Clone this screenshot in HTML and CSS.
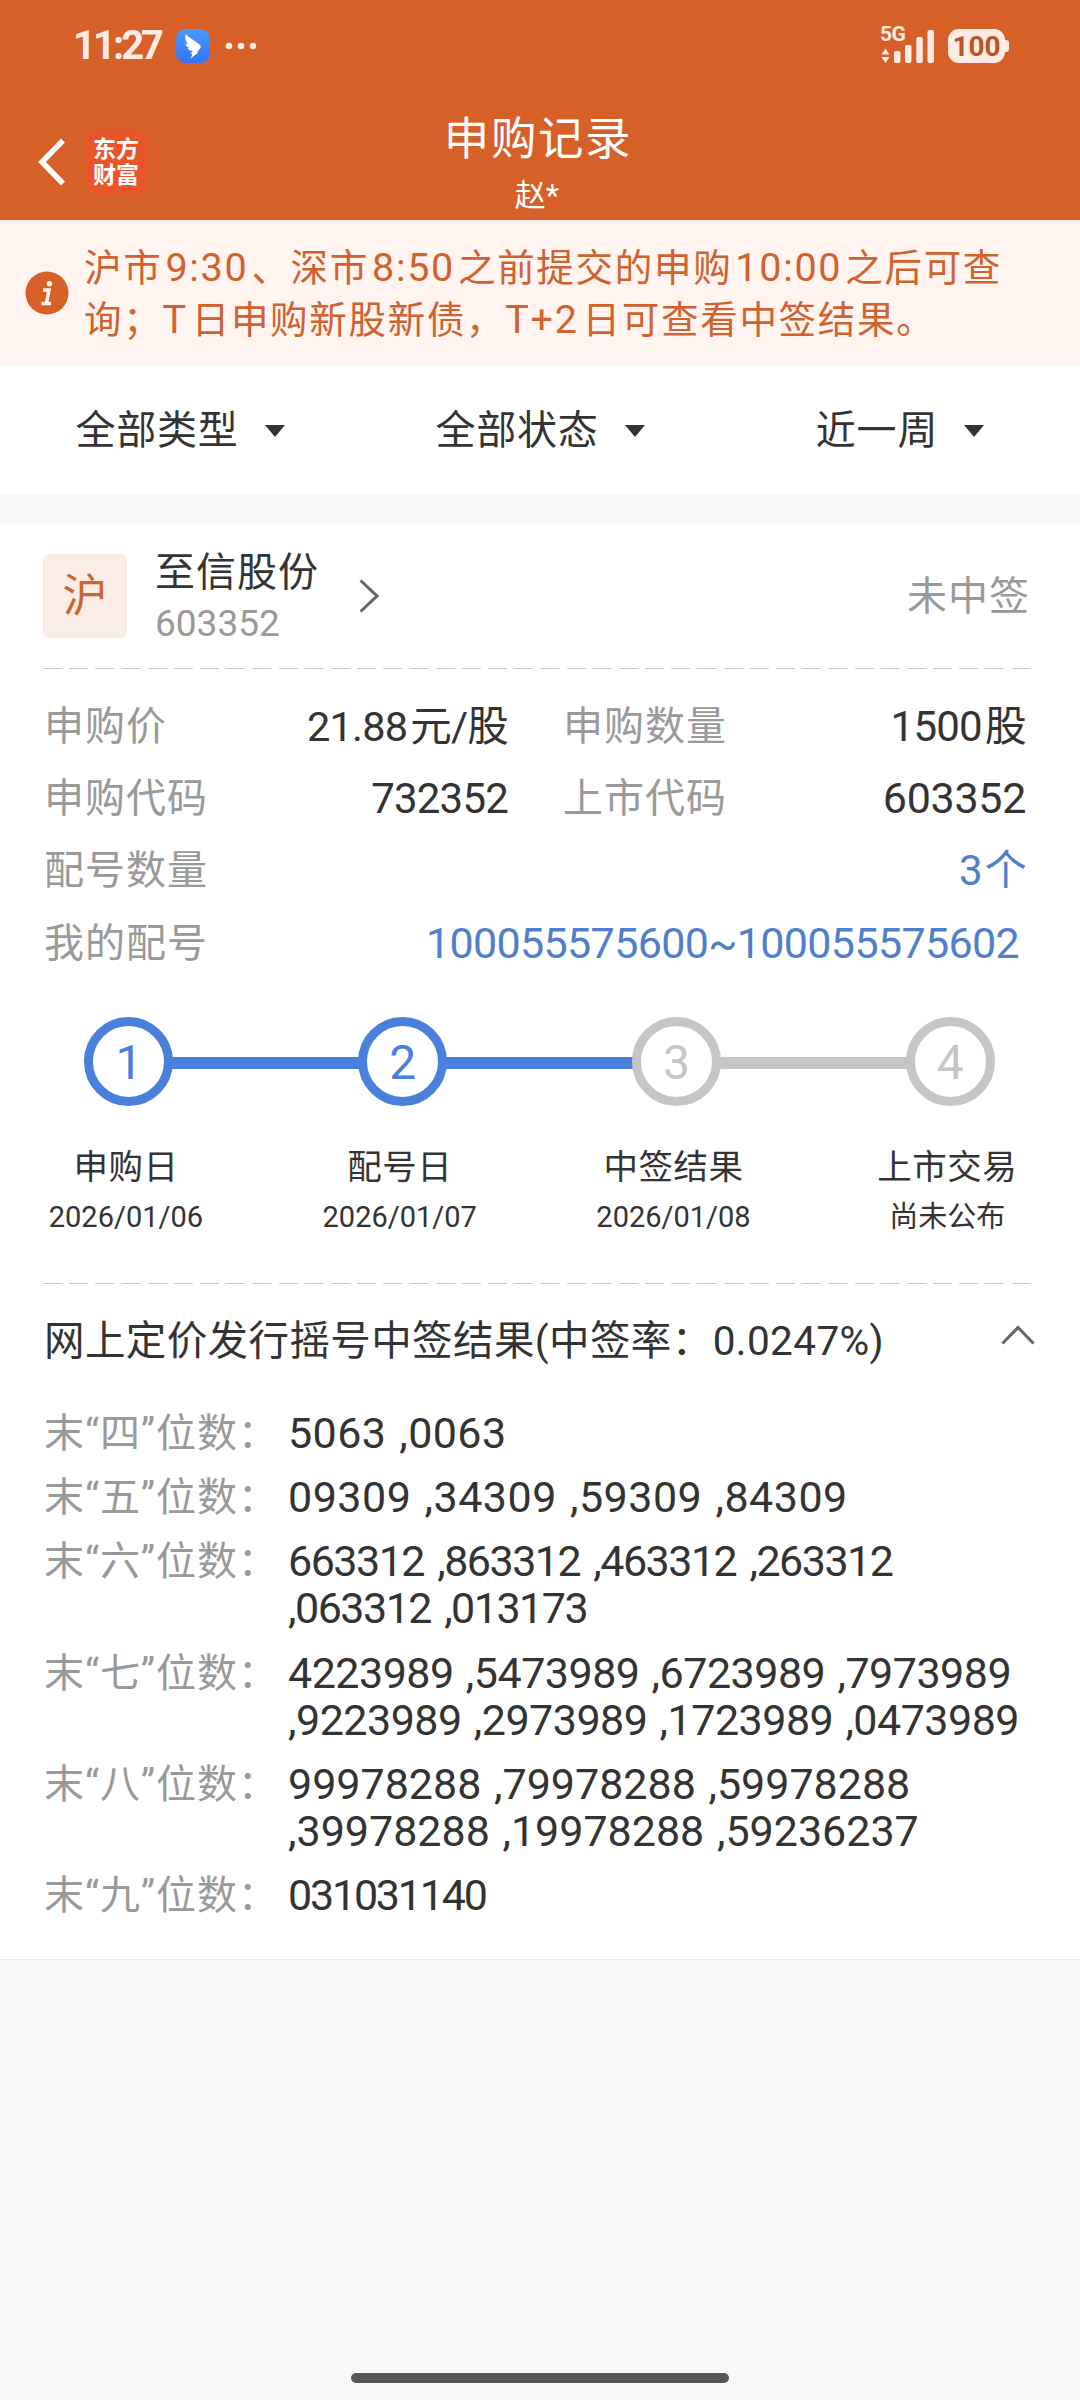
FILE: index.html
```html
<!DOCTYPE html>
<html lang="zh-CN">
<head>
<meta charset="UTF-8" />
<meta name="viewport" content="width=device-width, initial-scale=1" />
<title>申购记录</title>
<link rel="stylesheet" href="styles.css">
</head>
<body>
  <header>
    <!-- Barra de estado -->
    <div class="status-bar">
      <span class="time">11:27</span>
      <svg class="app-icon" viewBox="0 0 34 34">
        <defs>
          <linearGradient id="azul" x1="0" y1="0" x2="0" y2="1">
            <stop offset="0" stop-color="#4a9bf8" />
            <stop offset="1" stop-color="#3373f4" />
          </linearGradient>
        </defs>
        <rect width="34" height="34" rx="9" fill="url(#azul)" />
        <path d="M9.500 5c3 3.500 9 6 14.500 11 1 1 1 2 .3 3l-3.300 4.500h1.500l-8 6 2-4.500-2-.5 2.500-2.500c-2.500 0-4.500-1-5.500-3h2.500c-3-1-4.500-2.500-4.500-4.500l2.500 1c-2-2.500-3-5.500-2.500-10.500z" fill="#fff" />
      </svg>
      <svg class="dots" viewBox="0 0 32 8">
        <circle cx="4" cy="4" r="3.300" /><circle cx="16" cy="4" r="3.300" /><circle cx="28" cy="4" r="3.300" />
      </svg>
      <div class="network">
        <span>5G</span>
        <svg viewBox="0 0 56 34">
          <path d="M1.500 25.500l4-6 4 6zM1.500 28h8l-4 6z" />
          <rect x="14" y="22" width="6.500" height="12" rx="2" />
          <rect x="25" y="16" width="6.500" height="18" rx="2" />
          <rect x="36.300" y="8" width="6.500" height="26" rx="2" />
          <rect x="47.500" y="1" width="6.500" height="33" rx="2" />
        </svg>
      </div>
      <div class="battery">100</div>
    </div>

    <div class="nav">
      <svg class="back" viewBox="0 0 28 48"><path d="M25 2.500L4 24l21 21.500" /></svg>
      <div class="logo">东方<br>财富</div>
      <div class="nav-title">
        <h1>申购记录</h1>
        <p>赵*</p>
      </div>
    </div>
  </header>

  <div class="notice">
    <svg viewBox="0 0 44 44">
      <circle cx="22" cy="22" r="21.500" fill="#d75f28" />
      <circle cx="24.500" cy="12.700" r="2.700" fill="#fff4f0" />
      <path d="M18 19h6l-2.500 13M16.500 32.500h9.500" fill="none" stroke="#fff4f0" stroke-width="3.500" />
    </svg>
    <p>沪市<span class="num">9:30</span>、深市<span class="num">8:50</span>之前提交的申购<span class="num">10:00</span>之后可查<br>询；<span class="letter">T</span>日申购新股新债，<span class="letter">T+2</span>日可查看中签结果。</p>
  </div>

  <nav class="filters">
    <div>全部类型<i></i></div>
    <div>全部状态<i></i></div>
    <div>近一周<i></i></div>
  </nav>

  <main class="card">
    <div class="stock">
      <div class="market">沪</div>
      <div class="stock-name">
        <h2>至信股份</h2>
        <span>603352</span>
      </div>
      <svg class="arrow" viewBox="0 0 20 34"><path d="M1.500 1.500L18 17 1.500 32.500" /></svg>
      <div class="result">未中签</div>
    </div>

    <div class="dashed"></div>

    <dl class="info">
      <div><dt>申购价</dt><dd class="price"><span>21.88</span>元/股</dd></div>
      <div><dt>申购数量</dt><dd><span>1500</span>股</dd></div>
      <div><dt>申购代码</dt><dd>732352</dd></div>
      <div><dt>上市代码</dt><dd class="code">603352</dd></div>
      <div class="full"><dt>配号数量</dt><dd class="link"><span>3</span>个</dd></div>
      <div class="full"><dt>我的配号</dt><dd class="link range">100055575600~100055575602</dd></div>
    </dl>

    <!-- Pasos -->
    <div class="steps">
      <div class="step done">
        <b>1</b>
        <h3>申购日</h3>
        <span>2026/01/06</span>
      </div>
      <div class="step done">
        <b>2</b>
        <h3>配号日</h3>
        <span>2026/01/07</span>
      </div>
      <div class="step">
        <b>3</b>
        <h3>中签结果</h3>
        <span>2026/01/08</span>
      </div>
      <div class="step">
        <b>4</b>
        <h3>上市交易</h3>
        <span>尚未公布</span>
      </div>
    </div>

    <div class="dashed"></div>

    <div class="draw-title">
      <h2>网上定价发行摇号中签结果(中签率：<span>0.0247%)</span></h2>
      <svg viewBox="0 0 34 20"><path d="M1.500 18.500L17 2.500l15.500 16" /></svg>
    </div>

    <dl class="draw">
      <dt>末“四”位数：</dt><dd class="four">5063 ,0063</dd>
      <dt>末“五”位数：</dt><dd class="five">09309 ,34309 ,59309 ,84309</dd>
      <dt>末“六”位数：</dt><dd class="six">663312 ,863312 ,463312 ,263312 ,063312 ,013173</dd>
      <dt>末“七”位数：</dt><dd class="seven">4223989 ,5473989 ,6723989 ,7973989 ,9223989 ,2973989 ,1723989 ,0473989</dd>
      <dt>末“八”位数：</dt><dd class="eight">99978288 ,79978288 ,59978288 ,39978288 ,19978288 ,59236237</dd>
      <dt>末“九”位数：</dt><dd class="nine">031031140</dd>
    </dl>
  </main>

  <div class="home-bar"></div>
</body>
</html>
```
FILE: styles.css
```css
* {
  box-sizing: border-box;
}
body {
  margin: 0;
  height: 2400px;
  display: flex;
  flex-direction: column;
  font-family: Roboto, "Noto Sans CJK SC", sans-serif;
  font-size: 40px;
  line-height: 1.2;
  color: #333;
  background: #f7f8fa;
}
h1, h2, h3, p, dl, dd {
  margin: 0;
  font-weight: normal;
}
svg {
  display: block;
  flex: none;
}
header {
  height: 220px;
  background: #d75f28;
  color: #fff;
}
/* Barra de estado */
.status-bar {
  display: flex;
  align-items: center;
  height: 92px;
  padding: 0 71px 0 73px;
  color: #ffebe3;
}
.time {
  width: 103px;
  font-size: 40px;
  font-weight: 700;
  letter-spacing: -3px;
}
.app-icon {
  width: 34px;
  height: 34px;
}
.dots {
  width: 32px;
  height: 8px;
  margin-left: 15px;
  fill: #ffebe3;
}
.network {
  position: relative;
  margin-left: auto;
  margin-right: 12px;
}
.network span {
  position: absolute;
  top: -5px;
  left: 0;
  font-size: 21px;
  line-height: 21px;
  font-weight: 700;
  letter-spacing: -0.5px;
}
.network svg {
  width: 56px;
  height: 34px;
  fill: #ffebe3;
}
.battery {
  position: relative;
  width: 57px;
  height: 34px;
  margin-right: 4px;
  border-radius: 11px;
  background: #ffebe3;
  color: #b85528;
  font-size: 28px;
  line-height: 35px;
  font-weight: 700;
  text-align: center;
}
.battery::after {
  content: "";
  position: absolute;
  top: 11px;
  right: -4px;
  width: 5px;
  height: 12px;
  border-radius: 0 3px 3px 0;
  background: #ffebe3;
}
/* Cabecera */
.nav {
  position: relative;
  display: flex;
  align-items: center;
  height: 128px;
  padding: 12px 38px 0;
}
.back {
  width: 28px;
  height: 48px;
  fill: none;
  stroke: #fff;
  stroke-width: 5.5;
}
.logo {
  width: 62px;
  height: 64px;
  margin-left: 19px;
  padding: 7px 0 0 8px;
  border-radius: 12px;
  background: #e9552a;
  font-size: 23px;
  line-height: 26px;
  font-weight: 700;
}
.nav-title {
  position: absolute;
  left: 0;
  right: 0;
  top: 0;
  padding-top: 16px;
  text-align: center;
}
.nav-title h1 {
  padding-right: 4px;
  font-size: 45.500px;
  line-height: 64px;
  letter-spacing: 1.6px;
}
.nav-title p {
  padding-right: 6px;
  font-size: 31px;
  line-height: 47px;
}
/* Aviso */
.notice {
  display: flex;
  align-items: center;
  height: 145px;
  padding-left: 25px;
  background: #fff4f0;
  color: #cf622e;
}
.notice svg {
  width: 44px;
  height: 44px;
}
.notice p {
  margin-left: 15px;
  padding-top: 3px;
  font-size: 37.500px;
  line-height: 51px;
  letter-spacing: 1.7px;
  white-space: nowrap;
}
.notice .num {
  margin: 0 3px 0 3px;
  font-size: 39.500px;
}
.notice .letter {
  margin-right: 4px;
  font-size: 39.500px;
}
/* Filtros */
.filters {
  display: grid;
  grid-template-columns: repeat(3, 1fr);
  height: 130px;
  background: #fff;
}
.filters div {
  display: flex;
  align-items: center;
  justify-content: center;
  padding-top: 1px;
  letter-spacing: 0.8px;
}
.filters i {
  margin-left: 26px;
  border: 10px solid transparent;
  border-top: 12px solid #333;
  border-bottom: 0;
}
.card {
  height: 1436px;
  margin-top: 29px;
  padding: 30px 43px 0;
  background: #fff;
  border-bottom: 1px solid #ebebeb;
}
.stock {
  display: flex;
  align-items: center;
  height: 84px;
}
.market {
  width: 84px;
  height: 84px;
  border-radius: 6px;
  background: #faede6;
  color: #cb6630;
  font-size: 45px;
  line-height: 86px;
  text-align: center;
}
.stock-name {
  width: 203px;
  margin-left: 28px;
  margin-right: 1px;
  padding-top: 4px;
}
.stock-name h2 {
  font-size: 40px;
  line-height: 52px;
  letter-spacing: 1px;
  white-space: nowrap;
}
.stock-name span {
  display: block;
  font-size: 37px;
  line-height: 50px;
  color: #999;
}
.arrow {
  width: 20px;
  height: 34px;
}
.arrow path, .draw-title path {
  fill: none;
  stroke: #666;
  stroke-width: 3;
}
.result {
  margin-left: auto;
  margin-right: 7px;
  padding-top: 2px;
  letter-spacing: 1px;
  color: #999;
}
.dashed {
  height: 1px;
  width: 987px;
  background: repeating-linear-gradient(90deg, #ccc 0 19px, transparent 19px 26.180px);
}
.stock + .dashed {
  margin-top: 30px;
}
/* Datos */
.info {
  display: grid;
  grid-template-columns: 465px 464px;
  column-gap: 54px;
  grid-auto-rows: 72.200px;
  padding-top: 22px;
}
.info div {
  display: flex;
  align-items: center;
  justify-content: space-between;
}
.info .full {
  grid-column: 1 / 3;
}
.info dt {
  padding-left: 1px;
  letter-spacing: 1px;
  color: #999;
}
.info dd {
  font-size: 42px;
  letter-spacing: -0.8px;
}
.info dd span {
  margin-right: 3px;
}
.info .price {
  font-size: 41.500px;
}
.info .code {
  font-size: 43px;
  letter-spacing: -0.3px;
}
.info .link {
  color: #4f7fca;
}
.info .range {
  margin-right: 7px;
  font-size: 43px;
  letter-spacing: -0.650px;
}
/* Pasos */
.steps {
  display: grid;
  grid-template-columns: repeat(4, 273.800px);
  width: 1080px;
  height: 303px;
  margin-left: -51px;
  padding-top: 37px;
}
.step {
  position: relative;
  text-align: center;
}
.step b {
  position: relative;
  z-index: 1;
  display: block;
  width: 89px;
  height: 89px;
  margin: 0 auto;
  border: 9px solid #c5c5c5;
  border-radius: 50%;
  background: #fff;
  color: #c5c5c5;
  font-size: 48px;
  line-height: 73px;
  font-weight: 400;
}
.step.done b {
  border-color: #4a80dc;
  color: #4a80dc;
}
.step:not(:last-child)::after {
  content: "";
  position: absolute;
  top: 40px;
  left: 50%;
  width: 100%;
  height: 12px;
  background: #c5c5c5;
}
.step.done::after {
  background: #4a80dc !important;
}
.step h3 {
  margin-top: 36px;
  padding-right: 6px;
  font-size: 34.500px;
  line-height: 50px;
  letter-spacing: 0.5px;
}
.step span {
  display: block;
  padding-right: 6px;
  font-size: 29px;
  line-height: 50px;
}
/* Resultados */
.draw-title {
  display: flex;
  justify-content: space-between;
  width: 992px;
  padding: 27px 0 0 1px;
}
.draw-title h2 {
  font-size: 40.500px;
  line-height: 60px;
  letter-spacing: 0.4px;
}
.draw-title svg {
  width: 34px;
  height: 20px;
  margin-top: 14px;
}
.draw {
  display: grid;
  grid-template-columns: 245px 750px;
  row-gap: 17px;
  margin-top: 39px;
  line-height: 47.200px;
}
.draw dt {
  padding-left: 1px;
  letter-spacing: 0.9px;
  white-space: nowrap;
  color: #999;
}
.draw dd {
  font-size: 43px;
  word-spacing: 2px;
}
.draw .four {
  letter-spacing: 0.4px;
}
.draw .five {
  letter-spacing: 0.5px;
}
.draw .six {
  letter-spacing: -1.5px;
  word-spacing: 4px;
}
.draw .seven {
  letter-spacing: -0.5px;
}
.draw .eight {
  letter-spacing: 0;
}
.draw .nine {
  letter-spacing: -2.2px;
}
.home-bar {
  width: 378px;
  height: 10px;
  margin: auto auto 17px;
  border-radius: 5px;
  background: #555754;
}
```
